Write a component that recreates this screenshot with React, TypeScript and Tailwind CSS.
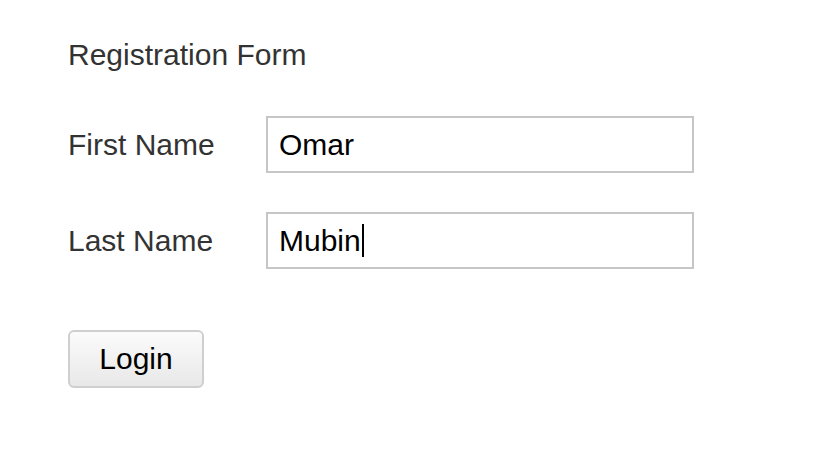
// Simple registration form: title, two labelled text fields and a button.
const FIELDS = [
  { label: "First Name", value: "Omar", focused: false },
  { label: "Last Name", value: "Mubin", focused: true },
];

export default function App() {
  return (
    <div className="min-h-screen bg-white pl-[68px] pt-[36px] font-['Liberation_Sans',Arial,sans-serif]">
      <h1 className="text-[30px] leading-[38px] text-[#333]">Registration Form</h1>

      <div className="mt-[42px] flex flex-col gap-[39px]">
        {FIELDS.map((f) => (
          <div key={f.label} className="flex items-center">
            <label className="w-[198px] text-[30px] leading-[36px] text-[#333]">{f.label}</label>
            <div className="flex h-[57px] w-[428px] items-center border-2 border-[#c6c6c6] bg-white px-[11px] text-[30px] leading-[36px] text-black">
              <span>{f.value}</span>
              {/* text caret in the focused field */}
              {f.focused && <span className="ml-[1px] h-[33px] w-[2px] bg-black" />}
            </div>
          </div>
        ))}
      </div>

      <button className="mt-[61px] h-[58px] w-[136px] rounded-[6px] border-2 border-[#cfcfcf] bg-gradient-to-b from-[#fbfbfb] to-[#e8e8e8] text-[30px] leading-[36px] text-black">
        Login
      </button>
    </div>
  );
}
